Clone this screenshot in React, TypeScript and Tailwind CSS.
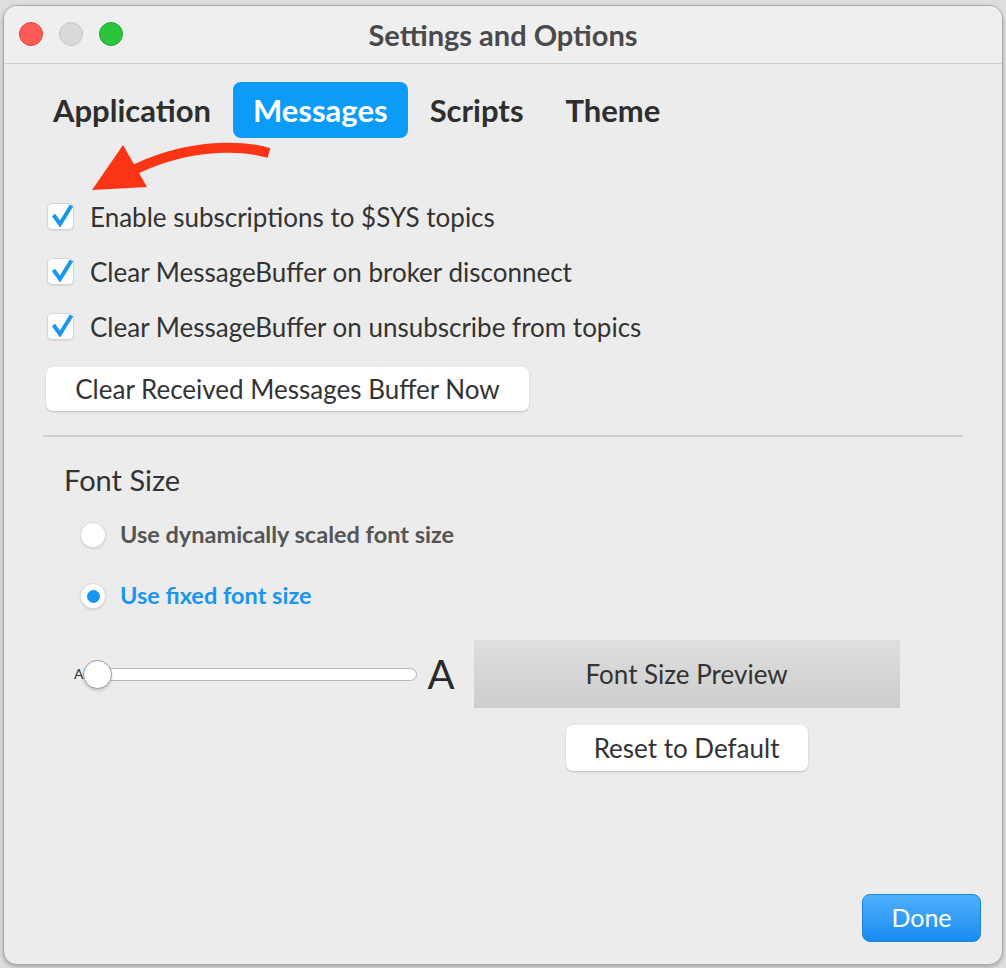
import React, { useState } from 'react';

const tabs = ['Application', 'Messages', 'Scripts', 'Theme'];

const checks = [
  'Enable subscriptions to $SYS topics',
  'Clear MessageBuffer on broker disconnect',
  'Clear MessageBuffer on unsubscribe from topics',
];

function CheckBox({ label }: { label: string }) {
  return (
    <div className="flex items-center h-[27px]">
      <div className="relative w-[27px] h-[27px] rounded-[5px] bg-white border border-[#d6d6d6] shadow-[0_1px_1px_rgba(0,0,0,0.08)]">
        <svg className="absolute left-[2px] top-[-1px]" width="24" height="24" viewBox="0 0 24 24">
          <path d="M3.5 12 L10 21 L21.5 2.5" fill="none" stroke="#1a96f0" strokeWidth="4" strokeLinejoin="miter" strokeLinecap="butt" />
        </svg>
      </div>
      <span className="ml-[16px] text-[26px] leading-none text-[#333333]">{label}</span>
    </div>
  );
}

function Radio({ label, on }: { label: string; on?: boolean }) {
  return (
    <div className="flex items-center h-[26px]">
      <div className="w-[26px] h-[26px] rounded-full bg-white border border-[#dcdcdc] shadow-[0_1px_2px_rgba(0,0,0,0.12)] flex items-center justify-center">
        {on && <div className="w-[13px] h-[13px] rounded-full bg-[#1a96f0]" />}
      </div>
      <span className={`ml-[14px] text-[23.5px] font-bold leading-none ${on ? 'text-[#1a96f0]' : 'text-[#555555]'}`}>{label}</span>
    </div>
  );
}

export default function App() {
  const [active, setActive] = useState('Messages');

  return (
    <div className="relative w-[1006px] h-[968px] bg-[#dedede] pt-[5px] px-[3px] pb-[3px]" style={{ fontFamily: 'Lato, "Noto Sans", sans-serif' }}>
      <div className="h-[960px] rounded-[14px] border border-[#a9a9a9] bg-[#ececec] flex flex-col overflow-hidden shadow-[0_2px_4px_rgba(0,0,0,0.25)]">
        {/* Title bar */}
        <div className="relative h-[58px] shrink-0 bg-[#efefef] border-b border-[#cfcfcf] flex items-center justify-center">
          <div className="absolute left-[15px] top-[16px] flex gap-[16px]">
            <div className="w-[24px] h-[24px] rounded-full bg-[#fd5b57] border border-[#e2463f]" />
            <div className="w-[24px] h-[24px] rounded-full bg-[#d9d9d9] border border-[#c6c6c6]" />
            <div className="w-[24px] h-[24px] rounded-full bg-[#2cc33d] border border-[#21a82f]" />
          </div>
          <span className="text-[29px] font-bold text-[#4a4a4a]">Settings and Options</span>
        </div>

        {/* Tabs */}
        <div className="flex gap-[2px] pl-[29px] mt-[18px]">
          {tabs.map((t) => (
            <button
              key={t}
              onClick={() => setActive(t)}
              className={`h-[56px] px-[20px] rounded-[8px] text-[31px] font-bold ${active === t ? 'bg-[#0c9bf6] text-white' : 'text-[#2e2e2e]'}`}
            >
              {t}
            </button>
          ))}
        </div>

        {/* Checkboxes */}
        <div className="flex flex-col gap-[28px] pl-[43px] mt-[65px]">
          {checks.map((c) => (
            <CheckBox key={c} label={c} />
          ))}
        </div>

        <div className="pl-[42px] mt-[27px]">
          <button className="w-[483px] h-[44px] rounded-[7px] bg-white shadow-[0_1px_2px_rgba(0,0,0,0.2)] text-[26px] text-[#333333]">
            Clear Received Messages Buffer Now
          </button>
        </div>

        <div className="mx-[39px] mt-[24px] h-[2px] bg-[#cdcdcd]" />

        {/* Font size */}
        <div className="pl-[60px] mt-[27px] h-[32px] flex items-center text-[29px] text-[#333333]">Font Size</div>

        <div className="flex flex-col gap-[35px] pl-[76px] mt-[26px]">
          <Radio label="Use dynamically scaled font size" />
          <Radio label="Use fixed font size" on />
        </div>

        <div className="flex mt-[31px] pl-[70px]">
          <div className="flex items-center h-[68px]">
            <span className="text-[14px] text-[#333333] leading-none">A</span>
            <div className="relative w-[334px] h-[29px] flex items-center">
              <div className="absolute left-[13px] right-0 h-[13px] rounded-full bg-white border border-[#b5b5b5]" />
              <div className="relative w-[29px] h-[29px] rounded-full bg-white border border-[#9a9a9a] shadow-[0_2px_3px_rgba(0,0,0,0.15)]" />
            </div>
            <span className="ml-[10px] text-[40px] text-[#2a2a2a] leading-none">A</span>
          </div>
          <div className="ml-[19px] flex flex-col items-center">
            <div className="w-[426px] h-[68px] bg-gradient-to-b from-[#dedede] to-[#cdcdcd] flex items-center justify-center text-[26px] text-[#333333]">
              Font Size Preview
            </div>
            <button className="mt-[17px] w-[242px] h-[46px] rounded-[7px] bg-white shadow-[0_1px_2px_rgba(0,0,0,0.2)] text-[26px] text-[#333333]">
              Reset to Default
            </button>
          </div>
        </div>

        <div className="mt-auto flex justify-end pr-[21px] pb-[22px]">
          <button className="w-[119px] h-[48px] rounded-[8px] bg-gradient-to-b from-[#4eb1fb] to-[#158bf0] border border-[#1a86e0] text-[25px] text-white">
            Done
          </button>
        </div>
      </div>

      {/* annotation arrow */}
      <svg className="absolute left-[85px] top-[140px]" width="190" height="56" viewBox="0 0 190 56">
        <path d="M184 13 C150 3, 95 6, 45 32" fill="none" stroke="#fb3416" strokeWidth="10" />
        <polygon points="7,50 38,5 62,47" fill="#fb3416" />
      </svg>
    </div>
  );
}
